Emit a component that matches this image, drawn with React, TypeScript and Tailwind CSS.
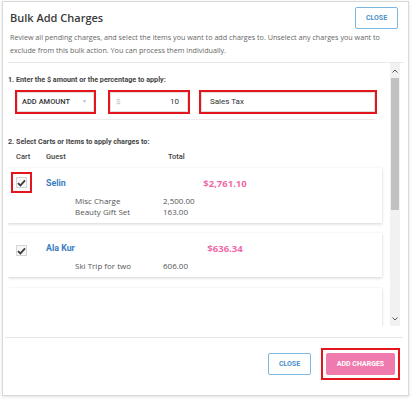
const openSans = "font-['Open_Sans',sans-serif]";
const roboto = "font-['Roboto',sans-serif]";

interface Item {
  label: string;
  amount: string;
}

interface Cart {
  guest: string;
  total: string;
  items: Item[];
  flagged?: boolean;
}

const carts: Cart[] = [
  {
    guest: "Selin",
    total: "$2,761.10",
    flagged: true,
    items: [
      { label: "Misc Charge", amount: "2,500.00" },
      { label: "Beauty Gift Set", amount: "163.00" },
    ],
  },
  {
    guest: "Ala Kur",
    total: "$636.34",
    items: [{ label: "Ski Trip for two", amount: "606.00" }],
  },
];

function Check({ flagged }: { flagged?: boolean }) {
  return (
    <div
      className={`w-[11px] h-[11px] shrink-0 border border-[#d6d6d6] bg-[#f7f7f7] flex items-center justify-center ${
        flagged ? "outline-2 outline-[#e3161d] outline-offset-[3px] mt-[9px]" : "mt-[12px]"
      }`}
    >
      <svg width="9" height="8" viewBox="0 0 9 8">
        <path d="M1 4.2 L3.4 6.5 L8 1.3" fill="none" stroke="#3a3a3a" strokeWidth="1.8" />
      </svg>
    </div>
  );
}

function CartCard({ cart }: { cart: Cart }) {
  return (
    <div className="bg-white shadow-[0_1px_3px_rgba(0,0,0,0.18)] pl-[8px] pb-[6px] flex">
      <Check flagged={cart.flagged} />
      <div className="flex-1 ml-[19px]">
        <div className="flex items-center h-[14px] mt-[9px]">
          <span className={`${roboto} w-[134px] text-[8.8px] font-bold text-[#3a7dc2]`}>{cart.guest}</span>
          <span className={`${openSans} w-[90px] text-center text-[9.5px] font-bold text-[#ef6aa8]`}>
            {cart.total}
          </span>
        </div>
        <div className="mt-[4px]">
          {cart.items.map((item) => (
            <div key={item.label} className={`${openSans} flex text-[8px] leading-[11px] text-[#555] pl-[29px]`}>
              <span className="w-[88px]">{item.label}</span>
              <span>{item.amount}</span>
            </div>
          ))}
        </div>
      </div>
    </div>
  );
}

function Scrollbar() {
  return (
    <div className="w-[10px] h-full bg-[#f1f1f1] flex flex-col items-center">
      <svg width="6" height="4" viewBox="0 0 6 4" className="mt-[6px]">
        <path d="M0.5 3.5 L3 1 L5.5 3.5" fill="none" stroke="#555" strokeWidth="1" />
      </svg>
      <div className="w-[8px] h-[132px] bg-[#c1c1c1] mt-[5px]" />
      <div className="flex-1" />
      <svg width="6" height="4" viewBox="0 0 6 4" className="mb-[5px]">
        <path d="M0.5 0.5 L3 3 L5.5 0.5" fill="none" stroke="#555" strokeWidth="1" />
      </svg>
    </div>
  );
}

export default function App() {
  return (
    <div className="w-[416px] h-[403px] bg-white pt-[1px] pl-[2px]">
      <div className="w-[407px] h-[395px] border border-[#d9d9d9] shadow-[0_1px_3px_rgba(0,0,0,0.12)] flex flex-col">
        {/* Header */}
        <div className="flex items-center justify-between pl-[7px] pr-[10px] pt-[5px]">
          <h1 className={`${openSans} text-[11px] font-semibold text-[#3a3a3a]`}>Bulk Add Charges</h1>
          <button
            className={`${roboto} w-[43px] h-[22px] rounded-[2px] border border-[#7db8e2] text-[7px] font-bold text-[#4a90cc]`}
          >
            CLOSE
          </button>
        </div>
        <p className={`${openSans} mt-[2px] pl-[7px] pr-[16px] text-[7.2px] leading-[13px] text-[#666]`}>
          Review all pending charges, and select the items you want to add charges to. Unselect any charges you want to
          exclude from this bulk action. You can process them individually.
        </p>
        <div className="mt-[5px] ml-[5px] mr-[4px] border-t border-[#e8e8e8]" />

        {/* Scroll area */}
        <div className="h-[263px] flex pl-[5px] pr-[8px]">
          <div className="flex-1 overflow-hidden pr-[8px]">
            <div className={`${roboto} pt-[11px] text-[7.2px] leading-[12px] font-bold text-[#444]`}>
              1. Enter the $ amount or the percentage to apply:
            </div>
            <div className="flex mt-[4px] pl-[7px] h-[24px]">
              <div className="w-[81px] border-2 border-[#e3161d]">
                <div className={`${roboto} h-full border border-[#dedede] flex items-center justify-between pl-[4px] pr-[6px] text-[7.5px] font-medium text-[#333]`}>
                  <span>ADD AMOUNT</span>
                  <span className="text-[#bbb] text-[5px]">▼</span>
                </div>
              </div>
              <div className="w-[82px] ml-[12px] border-2 border-[#e3161d]">
                <div className={`${roboto} h-full border border-[#dedede] flex items-center justify-between pl-[5px] pr-[8px] text-[8px] text-[#333]`}>
                  <span className="text-[#bbb]">$</span>
                  <span>10</span>
                </div>
              </div>
              <div className="w-[178px] ml-[9px] border-2 border-[#e3161d]">
                <div className={`${roboto} h-full border border-[#dedede] flex items-center pl-[8px] text-[8px] text-[#333]`}>
                  Sales Tax
                </div>
              </div>
            </div>
            <div className="mt-[5px] ml-[7px] w-[360px] border-t border-[#ececec]" />

            <div className={`${roboto} mt-[16px] text-[7.2px] leading-[12px] font-bold text-[#444]`}>
              2. Select Carts or Items to apply charges to:
            </div>
            <div className={`${roboto} mt-[3px] flex pl-[8px] text-[7.5px] leading-[12px] font-medium text-[#444]`}>
              <span className="w-[30px]">Cart</span>
              <span className="w-[122px]">Guest</span>
              <span>Total</span>
            </div>

            <div className="mt-[5px] flex flex-col gap-[10px]">
              {carts.map((cart) => (
                <CartCard key={cart.guest} cart={cart} />
              ))}
              <div className="bg-white shadow-[0_1px_3px_rgba(0,0,0,0.18)] h-[60px] mt-[1px]" />
            </div>
          </div>
          <Scrollbar />
        </div>

        {/* Footer */}
        <div className="mt-[11px] ml-[2px] mr-[5px] border-t border-[#e8e8e8]" />
        <div className="flex justify-end items-center gap-[10px] pt-[10px] pr-[8px]">
          <button
            className={`${roboto} w-[43px] h-[22px] rounded-[2px] border border-[#7db8e2] text-[7px] font-bold text-[#4a90cc]`}
          >
            CLOSE
          </button>
          <div className="border-2 border-[#e3161d] p-[3px]">
            <button
              className={`${roboto} block w-[69px] h-[22px] rounded-[2px] bg-[#ee7aae] text-[7px] font-bold text-white`}
            >
              ADD CHARGES
            </button>
          </div>
        </div>
      </div>
    </div>
  );
}
